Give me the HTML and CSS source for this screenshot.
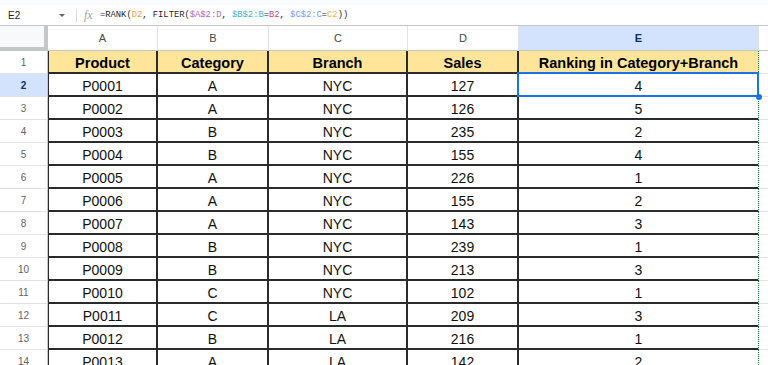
FILE: index.html
```html
<!DOCTYPE html>
<html lang="en">
<head>
  <meta charset="UTF-8">
  <title>Ranking in Category+Branch</title>
  <link rel="stylesheet" href="styles.css">
</head>
<body>

  <div class="top-strip"></div>

  <div class="formula-bar">
    <div class="name-box">
      <span class="cell-ref">E2</span>
      <span class="name-arrow"></span>
    </div>
    <div class="fx">fx</div>
    <div class="formula">=RANK(<span class="r1">D2</span>, FILTER(<span class="r2">$A$2:D</span>, <span class="r3">$B$2:B</span>=<span class="r4">B2</span>, <span class="r5">$C$2:C</span>=<span class="r6">C2</span>))</div>
  </div>

  <div class="sheet">
    <div class="corner"></div>
    <div class="ch">A</div>
    <div class="ch">B</div>
    <div class="ch">C</div>
    <div class="ch">D</div>
    <div class="ch active">E</div>
    <div class="ch fill"></div>

    <div class="rh">1</div>
    <div class="c head first">Product</div>
    <div class="c head">Category</div>
    <div class="c head">Branch</div>
    <div class="c head">Sales</div>
    <div class="c head last">Ranking in Category+Branch</div>
    <div class="f"></div>

    <div class="rh active">2</div>
    <div class="c first">P0001</div>
    <div class="c">A</div>
    <div class="c">NYC</div>
    <div class="c">127</div>
    <div class="c last selected">4<span class="handle"></span></div>
    <div class="f"></div>

    <div class="rh">3</div>
    <div class="c first">P0002</div>
    <div class="c">A</div>
    <div class="c">NYC</div>
    <div class="c">126</div>
    <div class="c last">5</div>
    <div class="f"></div>

    <div class="rh">4</div>
    <div class="c first">P0003</div>
    <div class="c">B</div>
    <div class="c">NYC</div>
    <div class="c">235</div>
    <div class="c last">2</div>
    <div class="f"></div>

    <div class="rh">5</div>
    <div class="c first">P0004</div>
    <div class="c">B</div>
    <div class="c">NYC</div>
    <div class="c">155</div>
    <div class="c last">4</div>
    <div class="f"></div>

    <div class="rh">6</div>
    <div class="c first">P0005</div>
    <div class="c">A</div>
    <div class="c">NYC</div>
    <div class="c">226</div>
    <div class="c last">1</div>
    <div class="f"></div>

    <div class="rh">7</div>
    <div class="c first">P0006</div>
    <div class="c">A</div>
    <div class="c">NYC</div>
    <div class="c">155</div>
    <div class="c last">2</div>
    <div class="f"></div>

    <div class="rh">8</div>
    <div class="c first">P0007</div>
    <div class="c">A</div>
    <div class="c">NYC</div>
    <div class="c">143</div>
    <div class="c last">3</div>
    <div class="f"></div>

    <div class="rh">9</div>
    <div class="c first">P0008</div>
    <div class="c">B</div>
    <div class="c">NYC</div>
    <div class="c">239</div>
    <div class="c last">1</div>
    <div class="f"></div>

    <div class="rh">10</div>
    <div class="c first">P0009</div>
    <div class="c">B</div>
    <div class="c">NYC</div>
    <div class="c">213</div>
    <div class="c last">3</div>
    <div class="f"></div>

    <div class="rh">11</div>
    <div class="c first">P0010</div>
    <div class="c">C</div>
    <div class="c">NYC</div>
    <div class="c">102</div>
    <div class="c last">1</div>
    <div class="f"></div>

    <div class="rh">12</div>
    <div class="c first">P0011</div>
    <div class="c">C</div>
    <div class="c">LA</div>
    <div class="c">209</div>
    <div class="c last">3</div>
    <div class="f"></div>

    <div class="rh">13</div>
    <div class="c first">P0012</div>
    <div class="c">B</div>
    <div class="c">LA</div>
    <div class="c">216</div>
    <div class="c last">1</div>
    <div class="f"></div>

    <div class="rh">14</div>
    <div class="c first">P0013</div>
    <div class="c">A</div>
    <div class="c">LA</div>
    <div class="c">142</div>
    <div class="c last">2</div>
    <div class="f"></div>
  </div>

</body>
</html>
```

FILE: styles.css
```css
body {
  margin: 0;
  padding: 0;
  background-color: #fff;
  font-family: "Liberation Sans", Arial, sans-serif;
  color: #000;
  overflow: hidden;
  height: 365px;
}

.top-strip {
  height: 5px;
  background-color: #f9fbfd;
}

.formula-bar {
  height: 20px;
  border-bottom: 1px solid #c4c7c5;
  display: flex;
  align-items: center;
  font-size: 10px;
  color: #1f1f1f;
}

.name-box {
  width: 77px;
  height: 13px;
  padding: 0 8px;
  box-sizing: border-box;
  display: flex;
  align-items: center;
  justify-content: space-between;
  border-right: 1px solid #dadce0;
}

.cell-ref {
  font-size: 10px;
  color: #1f1f1f;
}

.name-arrow {
  width: 0;
  height: 0;
  border-left: 3px solid transparent;
  border-right: 3px solid transparent;
  border-top: 3px solid #5f6368;
  margin-right: 3px;
}

.fx {
  font-family: "Liberation Serif", serif;
  font-style: italic;
  font-size: 12px;
  color: #a0a0a0;
  margin-left: 7px;
  width: 16px;
}

.formula {
  font-family: "Liberation Mono", "DejaVu Sans Mono", monospace;
  font-size: 8.8px;
  color: #1f1f1f;
  white-space: nowrap;
}

.r1 { color: #f4a13b; }
.r2 { color: #a36bc4; }
.r3 { color: #3cb6dc; }
.r4 { color: #c9477a; }
.r5 { color: #6d9ef5; }
.r6 { color: #f2b33d; }

.sheet {
  display: grid;
  grid-template-columns: 48px 110px 111px 139px 111px 240px 1fr;
  grid-template-rows: 25px;
  grid-auto-rows: 23px;
}

.sheet > div {
  box-sizing: border-box;
  display: flex;
  align-items: center;
  justify-content: center;
}

.corner {
  background-color: #f8f9fa;
  border-right: 4px solid #c4c7c5;
  border-bottom: 4px solid #c4c7c5;
}

.ch {
  font-size: 11px;
  color: #444746;
  border-right: 1px solid #e1e3e1;
  border-bottom: 1px solid #c4c7c5;
}

.ch.active {
  background-color: #d3e3fd;
  color: #0b2f6b;
  font-weight: bold;
}

.ch.fill {
  border-right: none;
}

.rh {
  font-size: 10px;
  color: #5f6368;
  border-right: 1px solid #c4c7c5;
  border-bottom: 1px solid #e1e3e1;
}

.rh.active {
  background-color: #d3e3fd;
  color: #0b2f6b;
  font-weight: bold;
}

.c {
  font-size: 14px;
  color: #111;
  border-right: 2px solid #2b2b2b;
  border-bottom: 2px solid #2b2b2b;
  padding-top: 2px;
}

.c.first {
  border-left: 1px solid #2b2b2b;
}

.c.head {
  background-color: #ffe599;
  font-weight: bold;
  font-size: 14.5px;
  color: #000;
}

.c.last {
  border-right: 1px dotted #188038;
}

.c.selected {
  position: relative;
}

.c.selected::after {
  content: "";
  position: absolute;
  top: -2px;
  left: -2px;
  right: -1px;
  bottom: -2px;
  border: 2px solid #1a73e8;
}

.handle {
  position: absolute;
  right: -4px;
  bottom: -5px;
  width: 6px;
  height: 6px;
  border-radius: 50%;
  background-color: #1a73e8;
  z-index: 2;
}

.f {
  border-bottom: 1px solid #e1e3e1;
}
```
